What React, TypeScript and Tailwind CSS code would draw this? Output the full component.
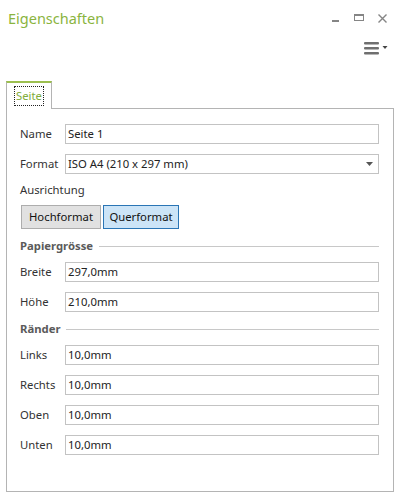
const font = { fontFamily: '"Noto Sans", "Open Sans", sans-serif' };

function Field({ label, value, select }: { label: string; value: string; select?: boolean }) {
  return (
    <div className="flex items-center h-[20px]">
      <div className="w-[45px] shrink-0 text-[11.3px] text-[#333]">{label}</div>
      <div className="flex-1 h-[20px] border border-[#c3c3c3] bg-white flex items-center pl-[2px] pr-[5px] text-[11.3px] text-[#222]">
        <span className="flex-1">{value}</span>
        {select && (
          <svg width="7" height="4" viewBox="0 0 7 4">
            <path d="M0 0h7L3.5 4z" fill="#555" />
          </svg>
        )}
      </div>
    </div>
  );
}

function Heading({ text }: { text: string }) {
  return (
    <div className="flex items-center h-[16px]">
      <span className="text-[11.3px] font-bold text-[#5a5a5a] pr-[6px]">{text}</span>
      <div className="flex-1 h-px bg-[#c8c8c8]" />
    </div>
  );
}

export default function App() {
  return (
    <div className="w-[400px] h-[499px] bg-white relative overflow-hidden" style={font}>
      <div className="flex items-start justify-between pl-[8px] pr-[13px] pt-[6px] h-[36px]">
        <div className="text-[14.5px] text-[#8ab43e] leading-[24px]">Eigenschaften</div>
        <div className="flex items-center gap-[14px] pt-[7px]">
          <svg width="8" height="10" viewBox="0 0 8 10">
            <rect x="0" y="7" width="7" height="2" fill="#858585" />
          </svg>
          <svg width="10" height="8" viewBox="0 0 10 8">
            <rect x="0.5" y="0.5" width="9" height="6" fill="none" stroke="#858585" />
            <rect x="0" y="0" width="10" height="2" fill="#858585" />
          </svg>
          <svg width="9" height="9" viewBox="0 0 9 9">
            <path d="M0.5 0.5l8 8M8.5 0.5l-8 8" stroke="#858585" strokeWidth="1.4" />
          </svg>
        </div>
      </div>
      <div className="flex justify-end pr-[12px] h-[45px] pt-[6px]">
        <svg width="24" height="13" viewBox="0 0 24 13">
          <rect x="0" y="0" width="15" height="2.5" rx="1" fill="#6f6f6f" />
          <rect x="0" y="5" width="15" height="2.5" rx="1" fill="#6f6f6f" />
          <rect x="0" y="10" width="15" height="2.5" rx="1" fill="#6f6f6f" />
          <path d="M18.5 4h5l-2.5 3z" fill="#444" />
        </svg>
      </div>
      <div className="pl-[6px] pr-[6px]">
        <div className="flex">
          <div className="w-[46px] h-[28px] border-x border-[#b4b4b4] border-t-2 border-t-[#9cbf4f] bg-white relative z-10 -mb-px pl-[7px] pt-[3px]">
            <div className="border border-dotted border-[#222] h-[20px] w-[30px] flex items-center justify-center text-[11.3px] text-[#80ad3a]">
              Seite
            </div>
          </div>
          <div className="flex-1" />
        </div>
        <div className="border border-[#b4b4b4] h-[384px] pl-[13px] pr-[14px] pt-[15px] flex flex-col">
          <Field label="Name" value="Seite 1" />
          <div className="mt-[10px]">
            <Field label="Format" value="ISO A4 (210 x 297 mm)" select />
          </div>
          <div className="mt-[8px] h-[16px] flex items-center text-[11.3px] text-[#333]">Ausrichtung</div>
          <div className="mt-[7px] flex gap-[2px] pl-px">
            <div className="w-[80px] h-[24px] bg-[#e1e1e1] border border-[#adadad] flex items-center justify-center text-[11.3px] text-[#111]">
              Hochformat
            </div>
            <div className="w-[76px] h-[24px] bg-[#cce4f7] border border-[#2a75b5] flex items-center justify-center text-[11.3px] text-[#111]">
              Querformat
            </div>
          </div>
          <div className="mt-[9px]">
            <Heading text="Papiergrösse" />
          </div>
          <div className="mt-[8px]">
            <Field label="Breite" value="297,0mm" />
          </div>
          <div className="mt-[10px]">
            <Field label="Höhe" value="210,0mm" />
          </div>
          <div className="mt-[9px]">
            <Heading text="Ränder" />
          </div>
          <div className="mt-[8px]">
            <Field label="Links" value="10,0mm" />
          </div>
          <div className="mt-[10px]">
            <Field label="Rechts" value="10,0mm" />
          </div>
          <div className="mt-[10px]">
            <Field label="Oben" value="10,0mm" />
          </div>
          <div className="mt-[10px]">
            <Field label="Unten" value="10,0mm" />
          </div>
        </div>
      </div>
    </div>
  );
}
